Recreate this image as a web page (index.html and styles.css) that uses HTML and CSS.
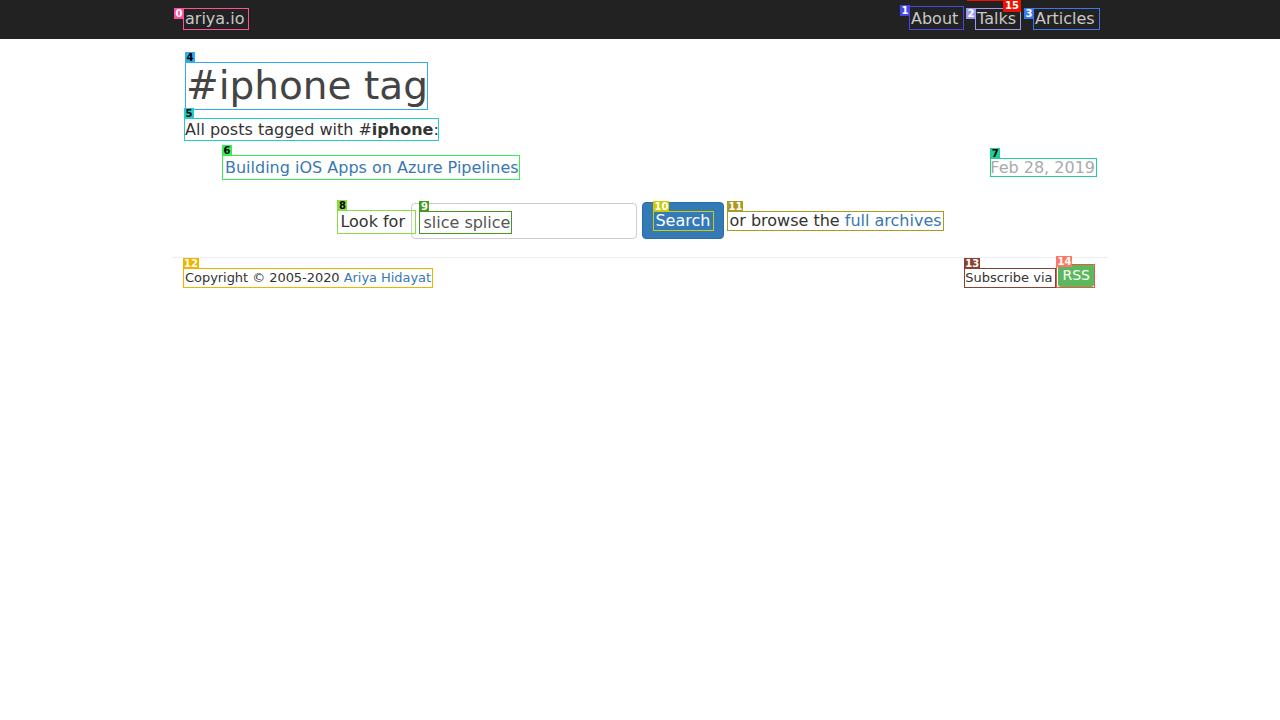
FILE: index.html
```html
<!DOCTYPE html>
<html lang="en">
<head>
<meta charset="utf-8">
<title>#iphone tag - ariya.io</title>
<link rel="stylesheet" href="styles.css">
</head>
<body>
<header class="navbar">
  <div class="container nav-inner">
    <a class="brand ann lab-left c0" data-n="0" href="#">ariya.io</a>
    <nav class="nav">
      <a class="nav-about ann lab-left c1" data-n="1" href="#">About</a>
      <span class="talks-wrap">
        <a class="nav-talks ann lab-left c2" data-n="2" href="#">Talks</a>
        <span class="ann15">15</span>
      </span>
      <a class="nav-articles ann lab-left c3" data-n="3" href="#">Articles</a>
    </nav>
  </div>
</header>
<main class="container">
  <h1 class="title ann lab-top c4" data-n="4">#iphone tag</h1>
  <p class="intro ann lab-top c5" data-n="5">All posts tagged with #<b>iphone</b>:</p>
  <ul class="posts">
    <li class="post">
      <a class="post-link ann lab-top c6" data-n="6" href="#">Building iOS Apps on Azure Pipelines</a>
      <span class="post-date ann lab-top c7" data-n="7">Feb 28, 2019</span>
    </li>
  </ul>
  <form class="search">
    <span class="look ann lab-top c8" data-n="8">Look for </span>
    <div class="input"><span class="value ann lab-top c9" data-n="9">slice splice</span></div>
    <button class="btn" type="button"><span class="btn-text ann lab-top c10" data-n="10">Search</span></button>
    <span class="browse ann lab-top c11" data-n="11">or browse the <a href="#">full archives</a></span>
  </form>
  <hr class="rule">
  <footer class="footer">
    <span class="copy ann lab-top c12" data-n="12">Copyright © 2005-2020 <a href="#">Ariya Hidayat</a></span>
    <span class="subscribe">
      <span class="sub-text ann lab-top c13" data-n="13">Subscribe via</span><a class="rss ann lab-top c14" data-n="14" href="#"><span class="rss-btn">RSS</span></a>
    </span>
  </footer>
</main>
</body>
</html>
```

FILE: styles.css
```css
html, body {
  margin: 0;
  padding: 0;
  background: #fff;
  font-family: "DejaVu Sans", sans-serif;
  color: #333;
}
a { text-decoration: none; color: #3a78b0; }

.container {
  width: 936px;
  margin: 0 auto;
  padding: 0 13px;
  box-sizing: border-box;
}

/* annotation overlays */
.ann {
  position: relative;
  outline: 1px solid var(--c);
  outline-offset: -1px;
}
.ann::before {
  content: attr(data-n);
  position: absolute;
  background: var(--c);
  color: var(--t, #fff);
  font: bold 10px/11px "DejaVu Sans", sans-serif;
  padding: 0 1px;
  min-width: 8px;
  text-align: center;
}
.lab-left::before { left: -9px; top: 0; }
.lab-top::before { left: 0; top: -10px; }

.c0 { --c: #ff4f9a; }
.c1 { --c: #4646e6; }
.c2 { --c: #9a9aee; }
.c3 { --c: #3a78ee; }
.c4 { --c: #33aaee; --t: #000; }
.c5 { --c: #22cccc; --t: #000; }
.c6 { --c: #33ee55; --t: #000; }
.c7 { --c: #22cc99; --t: #000; }
.c8 { --c: #88dd44; --t: #000; }
.c9 { --c: #449922; }
.c10 { --c: #cccc00; }
.c11 { --c: #aa9922; }
.c12 { --c: #f0b400; }
.c13 { --c: #884433; }
.c14 { --c: #ee5544; }
.c14::before { background: #ff7766; top: -8px; }
.c1::before { top: -1px; }

/* navbar */
.navbar {
  background: #222;
  height: 39px;
}
.nav-inner {
  display: flex;
  justify-content: space-between;
  align-items: flex-start;
}
.brand {
  display: inline-block;
  margin: 8px 0 0 -2px;
  padding: 0 5px 0 2px;
  font-size: 16px;
  line-height: 22px;
  color: #c8c8c8;
}
.nav {
  display: flex;
  align-items: flex-start;
  margin-right: -5px;
}
.nav a {
  display: inline-block;
  font-size: 16px;
  line-height: 22px;
  color: #c8c8c8;
  padding: 0 2px;
  margin-top: 8px;
}
.nav .nav-about {
  margin-top: 6px;
  padding-top: 2px;
  width: 51px;
}
.talks-wrap {
  position: relative;
  margin-left: 11px;
}
.nav .nav-talks { width: 42px; }
.ann15 {
  position: absolute;
  right: 0;
  top: 0;
  background: #ee1100;
  color: #fff;
  font: bold 10px/12px "DejaVu Sans", sans-serif;
  padding: 0 2px;
}
.talks-wrap::before {
  content: "";
  position: absolute;
  left: -8px;
  right: 0;
  top: 0;
  height: 1px;
  background: #ee1100;
}
.nav .nav-articles {
  margin-left: 12px;
  width: 63px;
}

/* heading */
.title {
  display: inline-block;
  margin: 23px 0 0 0;
  padding: 0 0 0 1px;
  font-size: 39px;
  line-height: 48px;
  font-weight: normal;
  color: #444;
}
.intro {
  display: table;
  margin: 8px 0 0 -1px;
  padding: 0 0 0 1px;
  font-size: 16px;
  line-height: 23px;
}

/* posts */
.posts {
  list-style: none;
  margin: 14px 0 0 0;
  padding: 0 0 0 37px;
}
.post {
  display: flex;
  justify-content: space-between;
  align-items: center;
}
.post-link {
  display: inline-block;
  padding: 2px 1px 2px 3px;
  font-size: 16px;
  line-height: 21px;
}
.post-date {
  display: inline-block;
  padding: 0 2px 0 0;
  margin-right: -2px;
  font-size: 16px;
  line-height: 19px;
  color: #aaa;
}

/* search */
.search {
  display: flex;
  justify-content: center;
  align-items: center;
  margin: 22px 0 0 0;
  padding-left: 1px;
}
.look {
  display: inline-block;
  width: 79px;
  box-sizing: border-box;
  padding: 0 0 0 3px;
  margin: 3px -5px 0 0;
  font-size: 16px;
  line-height: 24px;
  white-space: pre;
}
.input {
  width: 226px;
  height: 36px;
  box-sizing: border-box;
  border: 1px solid #ccc;
  border-radius: 4px;
  padding: 7px 0 0 7px;
  background: #fff;
}
.value {
  display: inline-block;
  padding: 0 2px 0 4px;
  font-size: 16px;
  line-height: 23px;
  color: #555;
}
.btn {
  margin-left: 5px;
  width: 82px;
  height: 37px;
  box-sizing: border-box;
  background: #337ab7;
  border: 1px solid #2e6da4;
  border-radius: 4px;
  padding: 0 0 0 10px;
  text-align: left;
  font-family: "DejaVu Sans", sans-serif;
}
.btn-text {
  display: inline-block;
  padding: 0 4px 0 2px;
  margin-top: 1px;
  font-size: 16px;
  line-height: 20px;
  color: #fff;
}
.browse {
  display: inline-block;
  margin-left: 3px;
  padding: 0 2px;
  font-size: 16px;
  line-height: 20px;
  margin-top: 1px;
}

.rule {
  margin: 18px -13px 0;
  border: 0;
  border-top: 1px solid #eee;
  height: 0;
}

/* footer */
.footer {
  display: flex;
  justify-content: space-between;
  align-items: flex-end;
  margin-top: 10px;
  font-size: 13px;
}
.copy {
  display: inline-block;
  margin-left: -2px;
  padding: 0 2px 0 2px;
  line-height: 20px;
  letter-spacing: -0.05px;
}
.subscribe {
  display: flex;
  align-items: flex-end;
}
.sub-text {
  display: inline-block;
  padding: 0 4px 0 1px;
  line-height: 20px;
}
.rss {
  display: inline-block;
  padding: 0 1px 1px 2px;
  margin-top: -4px;
}
.rss-btn {
  display: block;
  background: #5cb85c;
  color: #fff;
  font-size: 14px;
  line-height: 23px;
  padding: 0 4px;
  border-radius: 3px;
}
```
